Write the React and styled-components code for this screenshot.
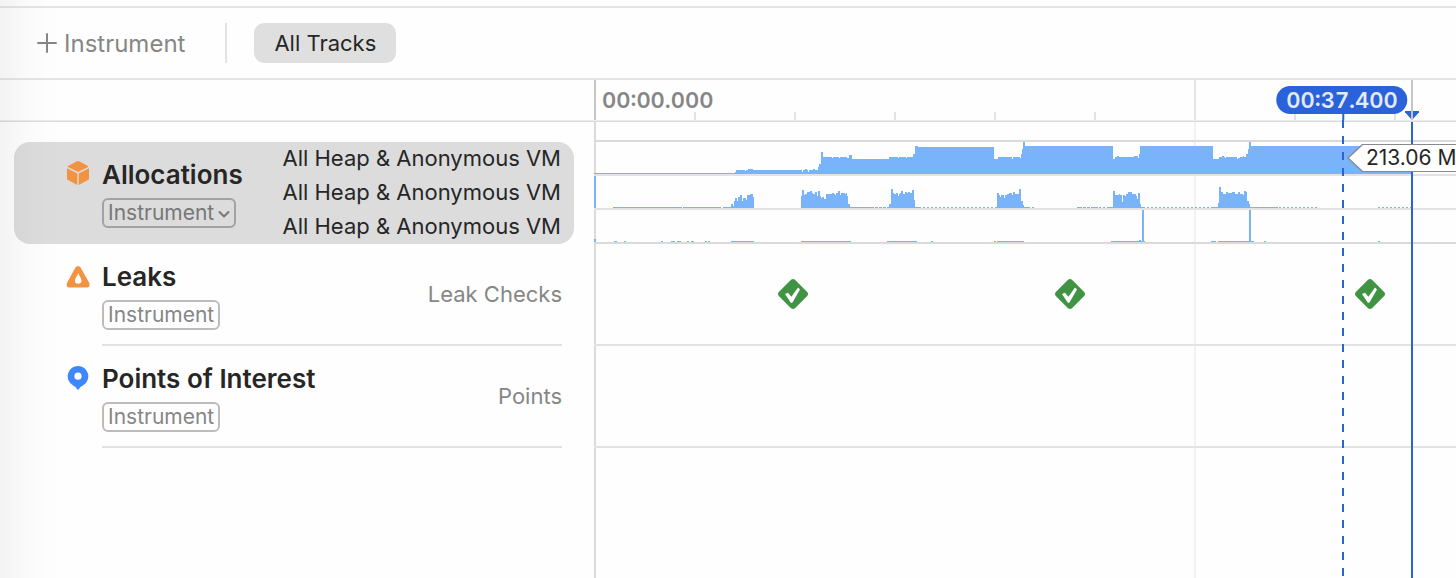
import React from 'react';
import styled, { createGlobalStyle, css } from 'styled-components';

const PX_PER_SECOND = 20;
const MINOR_TICKS = [5, 10, 15, 20, 25, 35, 40];
const MAJOR_TICK = 30;
const CURSOR_TIME = 37.4;
const END_TIME = 40.85;

const toPx = (seconds) => Math.round(seconds * PX_PER_SECOND);

// Each graph is a list of [x, height] steps. A step holds until the next one.
const dashes = (from, to) => {
    const steps = [];
    for (let x = from; x < to; x += 4) {
        steps.push([x, 1], [x + 2, 0]);
    }
    return steps;
};

const spans = (...ranges) => ranges.flatMap(([from, to]) => [[from, 1], [to, 0]]);

const liveBytes = [
    [0, 1], [141, 2], [142, 4], [151, 3], [152, 4], [154, 5], [159, 4], [208, 2], [209, 4], [211, 5],
    [213, 4], [214, 2], [215, 4], [219, 5], [221, 4], [224, 7], [225, 10], [227, 22], [229, 17],
    [238, 16], [239, 17], [245, 16], [246, 17], [253, 16], [255, 19], [258, 15], [295, 17], [304, 16],
    [305, 17], [312, 16], [313, 17], [319, 20], [321, 28], [324, 27], [400, 15], [404, 17], [418, 15],
    [419, 17], [426, 16], [427, 20], [428, 25], [429, 32], [431, 28], [519, 15], [521, 17], [523, 18],
    [525, 17], [540, 18], [544, 16], [545, 20], [546, 28], [619, 15], [625, 17], [628, 18], [630, 17],
    [631, 16], [632, 17], [643, 15], [644, 16], [646, 17], [649, 18], [650, 17], [652, 20], [654, 25],
    [655, 32], [657, 28], [817, 0],
];

const allocationRate = [
    [0, 32], [2, 0],
    ...spans([19, 88], [89, 127]),
    [129, 1], [137, 4], [139, 2], [140, 7], [141, 10], [143, 7], [144, 11], [146, 13], [148, 7],
    [149, 10], [152, 8], [153, 13], [156, 14], [159, 11], [160, 0],
    [207, 12], [208, 18], [210, 13], [211, 14], [213, 16], [216, 17], [218, 15], [219, 14], [221, 16],
    [223, 12], [224, 17], [226, 12], [227, 10], [228, 11], [230, 9], [232, 14], [238, 15], [240, 14],
    [241, 13], [242, 15], [244, 17], [246, 13], [247, 15], [251, 14], [252, 15], [253, 12], [254, 4],
    [256, 1], [280, 0],
    ...spans([281, 284], [285, 288], [289, 292]),
    [293, 1], [295, 4], [297, 19], [299, 15], [300, 14], [302, 15], [304, 12], [305, 14], [306, 15],
    [307, 17], [309, 14], [311, 16], [313, 15], [314, 16], [316, 15], [318, 18], [320, 8], [321, 1], [327, 0],
    ...dashes(329, 403),
    [403, 15], [405, 13], [406, 11], [407, 13], [410, 10], [411, 13], [413, 14], [415, 15], [418, 13],
    [419, 16], [421, 14], [425, 19], [427, 7], [429, 3], [430, 1], [436, 0],
    ...spans([438, 440], [483, 488], [489, 492], [493, 496], [497, 504], [505, 507], [509, 511]),
    [513, 1], [519, 17], [521, 13], [525, 14], [526, 13], [528, 6], [529, 13], [531, 12], [532, 14],
    [534, 16], [538, 14], [542, 12], [543, 9], [544, 15], [546, 4], [547, 1], [551, 0],
    ...dashes(553, 616),
    [617, 1], [624, 5], [625, 21], [627, 16], [629, 14], [632, 16], [634, 15], [638, 16], [641, 14],
    [644, 16], [646, 14], [649, 13], [650, 17], [652, 16], [653, 7], [655, 4], [656, 1], [684, 0],
    ...dashes(685, 723),
    ...dashes(784, 817),
];

const vmRate = [
    [0, 3], [2, 0],
    ...spans(
        [20, 23], [30, 32], [67, 69], [77, 81], [83, 87], [93, 95], [97, 100], [111, 113], [114, 116],
        [137, 160], [207, 257], [293, 323], [337, 339], [400, 402], [403, 430],
    ),
    [517, 1], [545, 2], [547, 1], [548, 32], [550, 1], [551, 0],
    ...spans([617, 622]),
    [624, 1], [655, 32], [657, 1], [660, 0],
    ...spans([670, 672], [784, 786]),
];

const graphs = [
    { label: 'All Heap & Anonymous VM', steps: liveBytes },
    { label: 'All Heap & Anonymous VM', steps: allocationRate },
    { label: 'All Heap & Anonymous VM', steps: vmRate },
];

const leakChecks = [9.9, 23.75, 38.75];

const GlobalStyle = createGlobalStyle`
    * {
        box-sizing: border-box;
    }

    body {
        margin: 0;
        background: #fefefe;
        color: #262626;
        font-family: Inter, 'Liberation Sans', sans-serif;
        font-size: 22px;
        overflow-x: hidden;
    }

    button, select {
        font: inherit;
        color: inherit;
        border: 0;
        padding: 0;
        background: none;
        cursor: pointer;
    }
`

const Page = styled.div`
    position: relative;
    display: flex;
    flex-direction: column;
    min-height: 100vh;
    overflow: hidden;
    padding-top: 6px;

    &::after {
        content: '';
        position: absolute;
        inset: 0 auto 0 0;
        width: 62px;
        background: linear-gradient(90deg, rgba(0, 0, 0, 0.045), rgba(0, 0, 0, 0.012) 50%, transparent);
        pointer-events: none;
    }
`

const Toolbar = styled.header`
    display: flex;
    align-items: center;
    height: 74px;
    padding-left: 37px;
    border-top: 2px solid #e5e5e5;
    border-bottom: 2px solid #e5e5e5;
`

const AddButton = styled.button`
    display: flex;
    align-items: center;
    gap: 7px;
    color: #868686;
    font-size: 24px;
`

const Divider = styled.span`
    width: 2px;
    height: 40px;
    margin: 0 27px 0 40px;
    background: #e3e3e3;
`

const FilterButton = styled.button`
    height: 40px;
    padding: 0 20px;
    border-radius: 10px;
    background: #dfdfdf;
`

const Workspace = styled.main`
    display: grid;
    grid-template-columns: 594px minmax(0, 1fr);
    flex: 1;
`

const rulerBox = css`
    height: 42px;
    margin-bottom: 20px;
    border-bottom: 1px solid #dadada;
    box-shadow: inset 0 -1px #ededed;
`

const Sidebar = styled.aside`
    min-width: 0;
`

const SidebarHeader = styled.div`
    ${rulerBox}
`

const TrackHeader = styled.section`
    display: flex;
    justify-content: space-between;
    height: 102px;
    margin-left: ${({ $selected }) => ($selected ? '14px' : '66px')};
    margin-right: ${({ $selected }) => ($selected ? '20px' : '32px')};
    padding-left: ${({ $selected }) => ($selected ? '52px' : '0')};
    padding-right: ${({ $selected }) => ($selected ? '13px' : '0')};
    border-radius: ${({ $selected }) => ($selected ? '16px' : '0')};
    background: ${({ $selected }) => ($selected ? '#dcdcdc' : 'linear-gradient(#e3e3e3, #e3e3e3) 36px 100% / 100% 2px no-repeat')};
`

const TrackInfo = styled.div`
    display: grid;
    grid-template-columns: 24px auto;
    grid-template-rows: 30px 30px;
    column-gap: 12px;
    row-gap: 8px;
    align-content: start;
    align-items: center;
    justify-items: start;
    padding-top: 18px;
`

const TrackTitle = styled.h2`
    margin: 0;
    font-size: 26px;
    line-height: 30px;
    font-weight: 600;
    white-space: nowrap;
`

const Tag = styled.span`
    position: relative;
    grid-column: 2;
    display: flex;
    align-items: center;
    height: 30px;
    padding: 0 4px;
    border: 2px solid ${({ $dark }) => ($dark ? '#a2a2a2' : '#bcbcbc')};
    border-radius: 6px;
    color: ${({ $dark }) => ($dark ? '#777777' : '#868686')};
    font-size: 21px;
    line-height: 26px;

    svg {
        position: absolute;
        right: 4px;
        top: 9px;
        pointer-events: none;
    }
`

const TagSelect = styled.select`
    appearance: none;
    padding-right: 15px;
    line-height: 26px;
`

const TrackLabels = styled.div`
    display: flex;
    flex-direction: column;
    justify-content: center;
    padding-bottom: 2px;
    color: ${({ $muted }) => ($muted ? '#868686' : '#262626')};
    line-height: 34px;
    text-align: right;
    white-space: nowrap;
`

const Timeline = styled.section`
    position: relative;
    min-width: 0;
`

const Ruler = styled.div`
    ${rulerBox}
    position: relative;
    padding-left: 8px;
    color: #868686;
    font-weight: 600;
    font-variant-numeric: tabular-nums;
    line-height: 41px;
`

const Tick = styled.span`
    position: absolute;
    bottom: 1px;
    left: ${({ $time }) => toPx($time)}px;
    width: 2px;
    height: ${({ $height }) => $height}px;
    background: ${({ $strong }) => ($strong ? '#c6c6c6' : '#e3e3e3')};
`

const GridLine = styled.span`
    position: absolute;
    top: 42px;
    bottom: 0;
    left: ${({ $time }) => toPx($time)}px;
    width: 2px;
    background: ${({ $strong }) => ($strong ? '#dadada' : '#f2f2f2')};
`

const CursorLine = styled(GridLine)`
    top: 40px;
    background: repeating-linear-gradient(#2a62da 0 8px, transparent 8px 16px);
`

const EndLine = styled(GridLine)`
    background: #2a62da;
`

const CursorTime = styled.time`
    position: absolute;
    top: 6px;
    left: ${({ $time }) => toPx($time)}px;
    transform: translateX(-50%);
    padding: 0 10px;
    border-radius: 14px;
    background: #2a62da;
    color: #e3eafa;
    font-weight: 600;
    font-variant-numeric: tabular-nums;
    line-height: 28px;

    &::after {
        content: '';
        position: absolute;
        top: 100%;
        left: 50%;
        width: 2px;
        height: 6px;
        background: #2a62da;
    }
`

const EndHandle = styled.span`
    position: absolute;
    bottom: 2px;
    left: ${({ $time }) => toPx($time) - 6}px;
    width: 14px;
    height: 8px;
    background: #2a62da;
    clip-path: polygon(0 0, 100% 0, 100% 15%, 57% 100%, 43% 100%, 0 15%);
`

const Lane = styled.div`
    position: relative;
    height: ${({ $tall }) => ($tall ? '102px' : '34px')};
    border-bottom: 2px solid ${({ $strong }) => ($strong ? '#dadada' : '#e3e3e3')};
`

const GraphGroup = styled.div`
    position: relative;
    margin-top: -2px;
    border-top: 2px solid #dadada;
`

const GraphSvg = styled.svg`
    display: block;
    width: 100%;
    height: 32px;
    fill: #79b3f9;
`

const Marker = styled.svg`
    position: absolute;
    top: 35px;
    left: ${({ $time }) => toPx($time) - 14}px;
    width: 30px;
    height: 30px;
`

const ValueTag = styled.output`
    position: absolute;
    top: 64px;
    left: ${({ $time }) => toPx($time) + 5}px;
    padding: 0 12px 0 19px;
    background: #8a8a8a;
    clip-path: polygon(0 50%, 15px 0, 100% 0, 100% 100%, 15px 100%);
    font-size: 21px;
    line-height: 28px;
    white-space: nowrap;

    &::before {
        content: '';
        position: absolute;
        inset: 1px 1px 1px 2px;
        background: #ffffff;
        clip-path: polygon(0 50%, 14px 0, 100% 0, 100% 100%, 14px 100%);
    }

    span {
        position: relative;
    }
`

const PlusIcon = () => (
    <svg width="20" height="20" viewBox="0 0 20 20" stroke="#868686" strokeWidth="2" strokeLinecap="round" aria-hidden="true">
        <path d="M10 1v18M1 10h18" />
    </svg>
)

const ChevronIcon = () => (
    <svg width="12" height="10" viewBox="0 0 12 10" fill="none" stroke="#777777" strokeWidth="2" strokeLinecap="round" strokeLinejoin="round" aria-hidden="true">
        <path d="M1.500 3 6 7.500l4.500-4.500" />
    </svg>
)

const BoxIcon = () => (
    <svg width="24" height="30" viewBox="0 0 24 30" fill="#f19340" aria-hidden="true">
        <path d="M11 1.3q1-.6 2 0l9 4.6q.8.5 0 1L12 12 2 6.9q-.8-.5 0-1z" />
        <path d="M1 8.2l10.3 5.4V25L2 20.1q-1-.6-1-1.7z" />
        <path d="M23 8.2l-10.300 5.400V25l9.300-4.900q1-.6 1-1.700z" />
    </svg>
)

const LeakIcon = () => (
    <svg width="24" height="24" viewBox="0 0 24 24" aria-hidden="true">
        <path d="M9.400 2.500q2.600-3.200 5.200 0L23.300 18q1.200 4.500-2.300 4.500H3.300Q-.2 22.500 1 18z" fill="#f19340" />
        <path d="M12.300 8c.5 2.500 3.200 5 3.200 7.500a3.300 3.300 0 0 1-6.600 0c0-2.500 2.900-5 3.400-7.500z" fill="#fefefe" />
    </svg>
)

const PinIcon = () => (
    <svg width="24" height="28" viewBox="0 0 24 28" aria-hidden="true">
        <path d="M12 1a10.300 10.300 0 0 1 5.200 19.200q-3.200 1.300-4.600 4.300-.6.900-1.200 0-1.400-3-4.600-4.300A10.300 10.300 0 0 1 12 1z" fill="#3d87f8" />
        <circle cx="12" cy="11.200" r="3.600" fill="#fefefe" />
    </svg>
)

const CheckMarker = ({ time }) => (
    <Marker $time={time} viewBox="0 0 30 30" role="img" aria-label="No leaks">
        <path d="M13 .8q2-1.600 4 0L29.200 13q1.600 2 0 4L17 29.200q-2 1.600-4 0L.8 17q-1.600-2 0-4z" fill="#409343" />
        <path d="M7 15l3-1.300 3.400 4L20 8.500l2 2-7.500 13-1.500.5z" fill="#ffffff" />
    </Marker>
)

const Graph = ({ steps }) => {
    const [[, firstHeight], ...rest] = steps;
    const outline = rest.map(([x, height]) => `H${x}V${32 - height}`).join('')

    return (
        <GraphSvg shapeRendering="crispEdges" aria-hidden="true">
            <path d={`M0 32V${32 - firstHeight}${outline}V32Z`} />
        </GraphSvg>
    )
}

const App = () => (
    <>
        <GlobalStyle />
        <Page>
            <Toolbar>
                <AddButton type="button"><PlusIcon />Instrument</AddButton>
                <Divider />
                <FilterButton type="button">All Tracks</FilterButton>
            </Toolbar>
            <Workspace>
                <Sidebar>
                    <SidebarHeader />
                    <TrackHeader $selected>
                        <TrackInfo>
                            <BoxIcon />
                            <TrackTitle>Allocations</TrackTitle>
                            <Tag $dark>
                                <TagSelect aria-label="Allocations track type">
                                    <option>Instrument</option>
                                </TagSelect>
                                <ChevronIcon />
                            </Tag>
                        </TrackInfo>
                        <TrackLabels>
                            {graphs.map(({ label }, index) => <span key={index}>{label}</span>)}
                        </TrackLabels>
                    </TrackHeader>
                    <TrackHeader>
                        <TrackInfo>
                            <LeakIcon />
                            <TrackTitle>Leaks</TrackTitle>
                            <Tag>Instrument</Tag>
                        </TrackInfo>
                        <TrackLabels $muted>Leak Checks</TrackLabels>
                    </TrackHeader>
                    <TrackHeader>
                        <TrackInfo>
                            <PinIcon />
                            <TrackTitle>Points of Interest</TrackTitle>
                            <Tag>Instrument</Tag>
                        </TrackInfo>
                        <TrackLabels $muted>Points</TrackLabels>
                    </TrackHeader>
                </Sidebar>
                <Timeline>
                    <GridLine $time={0} $strong />
                    <GridLine $time={MAJOR_TICK} />
                    <Ruler>
                        00:00.000
                        <Tick $time={0} $height={40} $strong />
                        {MINOR_TICKS.map((time) => <Tick key={time} $time={time} $height={8} />)}
                        <Tick $time={MAJOR_TICK} $height={40} />
                        <EndHandle $time={END_TIME} />
                        <Tick $time={END_TIME} $height={40} $strong />
                    </Ruler>
                    <GraphGroup>
                        {graphs.map(({ steps }, index) => (
                            <Lane key={index} $strong={index === graphs.length - 1}>
                                <Graph steps={steps} />
                            </Lane>
                        ))}
                    </GraphGroup>
                    <Lane $tall>
                        {leakChecks.map((time) => <CheckMarker key={time} time={time} />)}
                    </Lane>
                    <Lane $tall />
                    <CursorLine $time={CURSOR_TIME} />
                    <EndLine $time={END_TIME} />
                    <CursorTime $time={CURSOR_TIME}>00:37.400</CursorTime>
                    <ValueTag $time={CURSOR_TIME}><span>213.06 MiB</span></ValueTag>
                </Timeline>
            </Workspace>
        </Page>
    </>
)

export default App;
